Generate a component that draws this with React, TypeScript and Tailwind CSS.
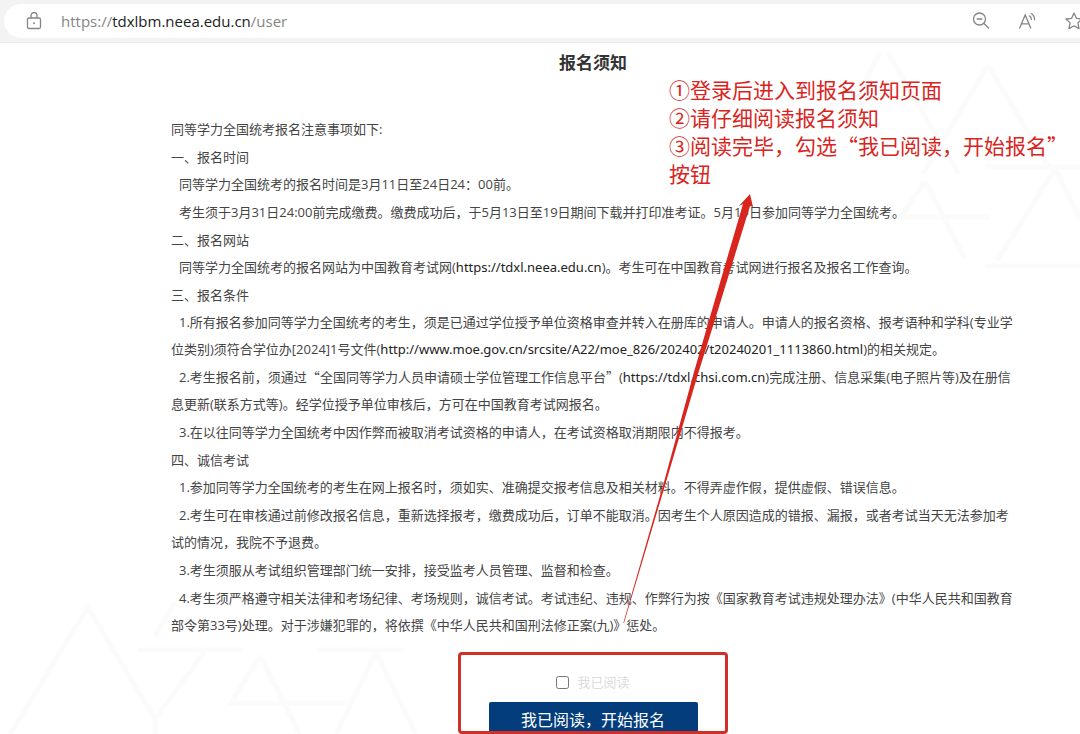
import { useState } from 'react';
import type { ReactNode } from 'react';

interface NoticeSection {
  heading: string;
  items: ReactNode[];
}

function Quoted({ children }: { children: ReactNode }) {
  return (
    <>
      <span className="font-['Noto_Sans_CJK_SC',sans-serif] leading-none">“</span>
      {children}
      <span className="font-['Noto_Sans_CJK_SC',sans-serif] leading-none">”</span>
    </>
  );
}

function Url({ children }: { children: ReactNode }) {
  return <span className="font-['Noto_Sans',sans-serif] leading-none text-[#222]">{children}</span>;
}

const SECTIONS: NoticeSection[] = [
  {
    heading: '一、报名时间',
    items: [
      '同等学力全国统考的报名时间是3月11日至24日24：00前。',
      '考生须于3月31日24:00前完成缴费。缴费成功后，于5月13日至19日期间下载并打印准考证。5月19日参加同等学力全国统考。',
    ],
  },
  {
    heading: '二、报名网站',
    items: [
      <>
        同等学力全国统考的报名网站为中国教育考试网(<Url>https://tdxl.neea.edu.cn</Url>
        )。考生可在中国教育考试网进行报名及报名工作查询。
      </>,
    ],
  },
  {
    heading: '三、报名条件',
    items: [
      <>
        1.所有报名参加同等学力全国统考的考生，须是已通过学位授予单位资格审查并转入在册库的申请人。申请人的报名资格、报考语种和学科(专业学位类别)须符合学位办[2024]1号文件(
        <Url>http://www.moe.gov.cn/srcsite/A22/moe_826/202402/t20240201_1113860.html</Url>
        )的相关规定。
      </>,
      <>
        2.考生报名前，须通过<Quoted>全国同等学力人员申请硕士学位管理工作信息平台</Quoted>(
        <Url>https://tdxl.chsi.com.cn</Url>
        )完成注册、信息采集(电子照片等)及在册信息更新(联系方式等)。经学位授予单位审核后，方可在中国教育考试网报名。
      </>,
      '3.在以往同等学力全国统考中因作弊而被取消考试资格的申请人，在考试资格取消期限内不得报考。',
    ],
  },
  {
    heading: '四、诚信考试',
    items: [
      '1.参加同等学力全国统考的考生在网上报名时，须如实、准确提交报考信息及相关材料。不得弄虚作假，提供虚假、错误信息。',
      '2.考生可在审核通过前修改报名信息，重新选择报考，缴费成功后，订单不能取消。因考生个人原因造成的错报、漏报，或者考试当天无法参加考试的情况，我院不予退费。',
      '3.考生须服从考试组织管理部门统一安排，接受监考人员管理、监督和检查。',
      '4.考生须严格遵守相关法律和考场纪律、考场规则，诚信考试。考试违纪、违规、作弊行为按《国家教育考试违规处理办法》(中华人民共和国教育部令第33号)处理。对于涉嫌犯罪的，将依撰《中华人民共和国刑法修正案(九)》惩处。',
    ],
  },
];

function AddressBar() {
  return (
    <header className="border-b border-[#ececec] bg-[#f3f3f3] py-1 pl-1">
      <div className="flex h-[34px] items-center rounded-l-full bg-white pl-[22px]">
        <svg className="h-[18px] w-4 shrink-0" viewBox="0 0 16 18" fill="none" stroke="#858585">
          <rect x="1.5" y="6" width="13" height="10.5" rx="1.5" strokeWidth="1.3" />
          <path d="M5 6V3.6a3 3 0 0 1 6 0V6" strokeWidth="1.3" />
          <circle cx="8" cy="11.2" r="1" fill="#858585" stroke="none" />
        </svg>
        <a href="#user" className="ml-[19px] text-[15px] leading-6 text-[#858585]">
          https://<span className="text-[#222]">tdxlbm.neea.edu.cn</span>/user
        </a>
        <div className="ml-auto flex shrink-0 items-center gap-[27px] text-[#858585]">
          <button type="button" aria-label="缩小">
            <svg className="size-[18px]" viewBox="0 0 18 18" fill="none" stroke="currentColor" strokeWidth="1.3">
              <circle cx="7.5" cy="7" r="6" />
              <path d="M4.7 7h5.6M12 11.5l5 5" />
            </svg>
          </button>
          <button type="button" aria-label="朗读">
            <svg className="h-[18px] w-5" viewBox="0 0 20 18" fill="none" stroke="currentColor" strokeWidth="1.3">
              <path d="M2.5 16.5 8.2 3l5.7 13.5M4.5 11.8h7.4" />
              <path d="M12.3 3.6c1.5 1 2.2 2.6 2.1 4.4M13.9 1.2c2.6 1.5 3.9 4 3.7 7.2" />
            </svg>
          </button>
          <button type="button" aria-label="收藏" className="-mr-1">
            <svg className="size-5" viewBox="0 0 20 20" fill="none" stroke="currentColor" strokeWidth="1.3">
              <path
                d="m10 2 2.4 5.3 5.6.7-4.1 3.9 1.1 5.7L10 14.8l-5 2.8 1.1-5.7L2 8l5.6-.7z"
                strokeLinejoin="round"
              />
            </svg>
          </button>
        </div>
      </div>
    </header>
  );
}

// faint triangle pattern in the top right and bottom left corners
function Watermark() {
  return (
    <>
      <svg
        className="absolute right-0 top-0 h-60 w-[420px]"
        viewBox="0 0 420 240"
        fill="none"
        stroke="#fbfbfb"
        strokeWidth="5"
        aria-hidden="true"
      >
        <path d="m220 10-34 62M228 10l70 120M328 22l-65 108M328 22l62 104M325 124h95M230 174h100M265 138l-24 36M265 138l40 78M395 126l-58 92M395 126l25 50M325 223h95M60 60l-50 90" />
      </svg>
      <svg
        className="absolute bottom-0 left-0 h-36 w-[420px]"
        viewBox="0 0 420 144"
        fill="none"
        stroke="#fbfbfb"
        strokeWidth="5"
        aria-hidden="true"
      >
        <path d="M10 144 88 17l67 112v15M155 129l50-68M138 60h105M260 66l-29 47h116M260 66l40 78M318 60h86M376 62l-40 82M376 62l40 82M175 12l-20 34" />
      </svg>
    </>
  );
}

function Annotation() {
  return (
    <>
      <p className="absolute right-0 top-8 w-[411px] font-['Noto_Sans_CJK_SC',sans-serif] text-[21px] leading-7 text-[#d8251d]">
        ①登录后进入到报名须知页面
        <br />
        ②请仔细阅读报名须知
        <br />
        ③阅读完毕，勾选“我已阅读，开始报名”
        <br />
        按钮
      </p>
      <svg
        className="pointer-events-none absolute right-[327px] top-[151px] h-[430px] w-[130px]"
        viewBox="0 0 130 430"
        fill="#d8251d"
        aria-hidden="true"
      >
        <path d="m127 0 3 13-3-1-32 104-20 64-32 108L1 429l-.6-.2L41 288l30-110 18-62 31-106-4 2z" />
      </svg>
    </>
  );
}

export default function App() {
  const [agreed, setAgreed] = useState(false);

  return (
    <div className="min-h-screen overflow-hidden bg-white font-['Open_Sans','Noto_Sans_CJK_SC',sans-serif] text-[#444]">
      <AddressBar />
      <main className="relative pl-[171px] pr-[65px] pt-2">
        <Watermark />
        <div className="relative">
          <h1 className="text-center text-[17px] font-bold leading-6 text-[#333]">报名须知</h1>
          <div className="mt-[41px] text-[13px] leading-[27px]">
            <p className="pb-px">同等学力全国统考报名注意事项如下:</p>
            {SECTIONS.map((section) => (
              <section key={section.heading}>
                <h2>{section.heading}</h2>
                {section.items.map((item, i) => (
                  <p key={i} className="pb-px indent-2">
                    {item}
                  </p>
                ))}
              </section>
            ))}
          </div>

          <form
            className="relative mx-auto mt-3 flex w-[270px] flex-col items-center pt-5"
            onSubmit={(e) => e.preventDefault()}
          >
            <label className="flex items-center gap-2 text-[13px] leading-5 text-[#dcdcdc]">
              <input
                type="checkbox"
                checked={agreed}
                onChange={(e) => setAgreed(e.target.checked)}
                className="size-[13px]"
              />
              我已阅读
            </label>
            <button type="submit" className="mt-[10px] h-8 w-[209px] rounded-t-xs bg-[#043d7c] pt-1 text-base leading-7 text-white">
              我已阅读，开始报名
            </button>
            <div className="pointer-events-none absolute inset-0 rounded-sm border-3 border-[#d12f2a]" />
          </form>
        </div>
        <Annotation />
      </main>
    </div>
  );
}
